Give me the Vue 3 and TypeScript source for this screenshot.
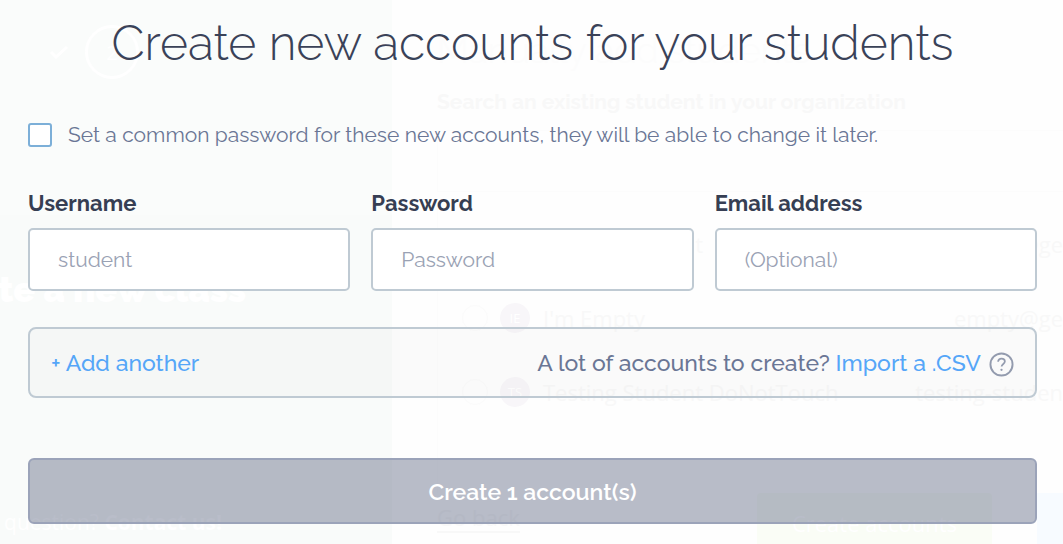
<script setup lang="ts">
import { computed, reactive, ref } from 'vue'

interface Account {
  username: string
  password: string
  email: string
}

interface Student {
  initials: string
  name: string
  email: string
}

const commonPassword = ref(false)
const accounts = reactive<Account[]>([{ username: '', password: '', email: '' }])
const students: Student[] = [
  { initials: 'TS', name: 'Testing Student', email: 'student@ge' },
  { initials: 'IE', name: "I'm Empty", email: 'empty@ge' },
  { initials: 'TS', name: 'Testing Student DoNotTouch', email: 'testing-studen' },
]
const canSubmit = computed(() => accounts.every((a) => a.username !== '' && a.password !== ''))

function addAccount(): void {
  accounts.push({ username: '', password: '', email: '' })
}
</script>

<template>
  <div class="screen">
    <div class="backdrop" aria-hidden="true">
      <aside class="side">
        <div class="steps">
          <svg class="tick" viewBox="0 0 20 14"><path d="M2 7l5 5L18 2" fill="none" stroke="#fff" stroke-width="3" /></svg>
          <span class="step">2</span>
        </div>
        <div class="side-body">
          <strong class="side-title">Create a new class</strong>
          <span class="side-help">question? <b>Contact us!</b></span>
        </div>
      </aside>
      <section class="page">
        <div class="page-title">Manually add students</div>
        <div class="page-label">Search an existing student in your organization</div>
        <div class="search"></div>
        <div class="list">
          <div v-for="s in students" :key="s.email" class="row">
            <span class="dot"></span>
            <span class="avatar">{{ s.initials }}</span>
            <span class="name">{{ s.name }}</span>
            <span class="mail">{{ s.email }}</span>
          </div>
        </div>
        <div class="page-foot">
          <span class="back">Go back</span>
          <span class="green">Create accounts</span>
          <span class="blue"></span>
        </div>
      </section>
    </div>

    <form class="dialog" @submit.prevent>
      <h1>Create new accounts for your students</h1>
      <label class="common">
        <input v-model="commonPassword" type="checkbox" />
        <span>Set a common password for these new accounts, they will be able to change it later.</span>
      </label>

      <div v-for="(account, i) in accounts" :key="i" class="fields">
        <div class="field">
          <label :for="`username-${i}`">Username</label>
          <input :id="`username-${i}`" v-model="account.username" type="text" placeholder="student" />
        </div>
        <div class="field">
          <label :for="`password-${i}`">Password</label>
          <input :id="`password-${i}`" v-model="account.password" type="password" placeholder="Password" />
        </div>
        <div class="field">
          <label :for="`email-${i}`">Email address</label>
          <input :id="`email-${i}`" v-model="account.email" type="email" placeholder="(Optional)" />
        </div>
      </div>

      <div class="more">
        <button type="button" class="add" @click="addAccount">+ Add another</button>
        <div class="import">
          <span>A lot of accounts to create? <a href="#import">Import a .CSV</a></span>
          <button type="button" class="help" aria-label="CSV help">
            <svg viewBox="0 0 26 26" fill="none" stroke="#939bae" stroke-width="2">
              <circle cx="13" cy="13" r="11.5" />
              <path d="M9.5 10.2c0-2 1.5-3.300 3.500-3.300s3.500 1.200 3.500 3c0 2.500-3.400 2.600-3.400 5.300" stroke-width="1.800" />
              <circle cx="13" cy="18.500" r="1.200" fill="#939bae" stroke="none" />
            </svg>
          </button>
        </div>
      </div>

      <button type="submit" class="submit" :disabled="!canSubmit">Create {{ accounts.length }} account(s)</button>
    </form>
  </div>
</template>

<style>
body {
  margin: 0;
  background: #fefefe;
}
</style>

<style scoped>
* {
  box-sizing: border-box;
}

.screen {
  position: relative;
  min-height: 100vh;
  overflow: hidden;
  font-family: Raleway, Lato, sans-serif;
  font-size: 21px;
  color: #6a7695;
}

.backdrop {
  position: absolute;
  inset: 0;
  display: flex;
  overflow: hidden;
  white-space: nowrap;
  font-family: "Open Sans", sans-serif;
  color: #f8f8f8;
}

.side {
  display: flex;
  flex: 0 0 392px;
  flex-direction: column;
  min-width: 0;
  background: #fafcfb;
  color: #fff;
}

.steps {
  display: flex;
  align-items: center;
  gap: 16px;
  height: 215px;
  padding: 0 0 111px 49px;
}

.tick {
  width: 20px;
}

.step {
  display: grid;
  place-items: center;
  width: 54px;
  height: 54px;
  border: 3px solid #fff;
  border-radius: 50%;
  font-size: 20px;
}

.side-body {
  display: flex;
  flex: 1;
  flex-direction: column;
  align-items: flex-end;
  justify-content: space-between;
  padding: 50px 146px 6px 0;
  background: #f9fbfa;
}

.side-title {
  font-family: Raleway, Lato, sans-serif;
  font-size: 36px;
  font-weight: 900;
  line-height: 48px;
}

.side-help {
  padding-right: 24px;
  line-height: 32px;
}

.page {
  flex: 1;
  min-width: 0;
  padding-left: 45px;
  font-size: 22px;
}

.page-title {
  padding-top: 20px;
  font-family: Raleway, Lato, sans-serif;
  font-size: 36px;
  font-weight: 300;
  line-height: 60px;
  color: #fcfcfc;
}

.page-label {
  padding-top: 6px;
  font-family: Raleway, Lato, sans-serif;
  font-size: 21px;
  font-weight: 700;
  line-height: 32px;
}

.search {
  height: 62px;
  margin: 12px 0 15px;
  border: 1px solid #fcfcfc;
  border-right: 0;
}

.list {
  height: 286px;
  border-left: 1px solid #fcfcfc;
}

.row {
  display: flex;
  align-items: center;
  height: 74px;
  padding-left: 24px;
}

.dot {
  flex: none;
  width: 26px;
  height: 26px;
  border: 1px solid #fbfbfb;
  border-radius: 50%;
}

.avatar {
  display: grid;
  flex: none;
  place-items: center;
  width: 30px;
  height: 30px;
  margin: 0 13px 0 12px;
  border-radius: 50%;
  background: #f8f6f9;
  color: #fff;
  font-size: 13px;
}

.mail {
  margin-left: auto;
}

.page-foot {
  display: flex;
  height: 60px;
}

.back {
  align-self: flex-start;
  margin-top: 10px;
  border-bottom: 2px solid #f8f8f8;
  line-height: 28px;
}

.green {
  width: 235px;
  margin-left: auto;
  border-radius: 4px;
  background: #fafdf6;
  color: #fff;
  line-height: 60px;
  text-align: center;
}

.blue {
  width: 26px;
  margin-left: 45px;
  background: #f7fbff;
}

.dialog {
  position: relative;
  padding: 8px 26px 20px 28px;
}

h1 {
  margin: 0;
  font-size: 48px;
  font-weight: 300;
  line-height: 70px;
  text-align: center;
  color: #3a4258;
}

.common {
  display: flex;
  align-items: center;
  gap: 16px;
  margin-top: 41px;
  line-height: 32px;
}

.common input {
  flex: none;
  width: 24px;
  height: 24px;
  margin: 0;
  appearance: none;
  border: 2px solid #7cafd8;
  border-radius: 3px;
  background: #fff;
}

.common input:checked {
  background: #7cafd8;
}

.fields {
  display: grid;
  grid-template-columns: repeat(3, minmax(0, 1fr));
  gap: 21px;
  margin-top: 36px;
}

.field label {
  display: block;
  margin-bottom: 9px;
  font-size: 22px;
  font-weight: 700;
  line-height: 32px;
  color: #363e53;
}

.field input {
  display: block;
  width: 100%;
  height: 63px;
  padding: 0 28px;
  border: 2px solid #bfcad3;
  border-radius: 5px;
  background: #fff;
  color: #3a4258;
  font: inherit;
}

.field input::placeholder {
  color: #9aa2b4;
  opacity: 1;
}

.more {
  display: flex;
  align-items: center;
  justify-content: space-between;
  min-height: 71px;
  margin-top: 36px;
  padding: 0 21px;
  border: 2px solid #bfcad3;
  border-radius: 8px;
  background: rgba(0, 0, 0, 0.016);
  font-size: 23px;
  font-weight: 500;
}

.add,
.help {
  padding: 0;
  border: 0;
  background: none;
  color: #55a6f8;
  font: inherit;
  cursor: pointer;
}

.import {
  display: flex;
  align-items: center;
  gap: 8px;
}

.import a {
  color: #55a6f8;
  text-decoration: none;
}

.help svg {
  display: block;
  width: 25px;
  height: 25px;
  margin-top: 4px;
}

.submit {
  display: block;
  width: 100%;
  min-height: 66px;
  margin-top: 60px;
  border: 2px solid #9ba3b9;
  border-radius: 6px;
  background: rgba(43, 55, 91, 0.33);
  color: #fff;
  font: inherit;
  font-size: 23px;
  font-weight: 600;
}
</style>
